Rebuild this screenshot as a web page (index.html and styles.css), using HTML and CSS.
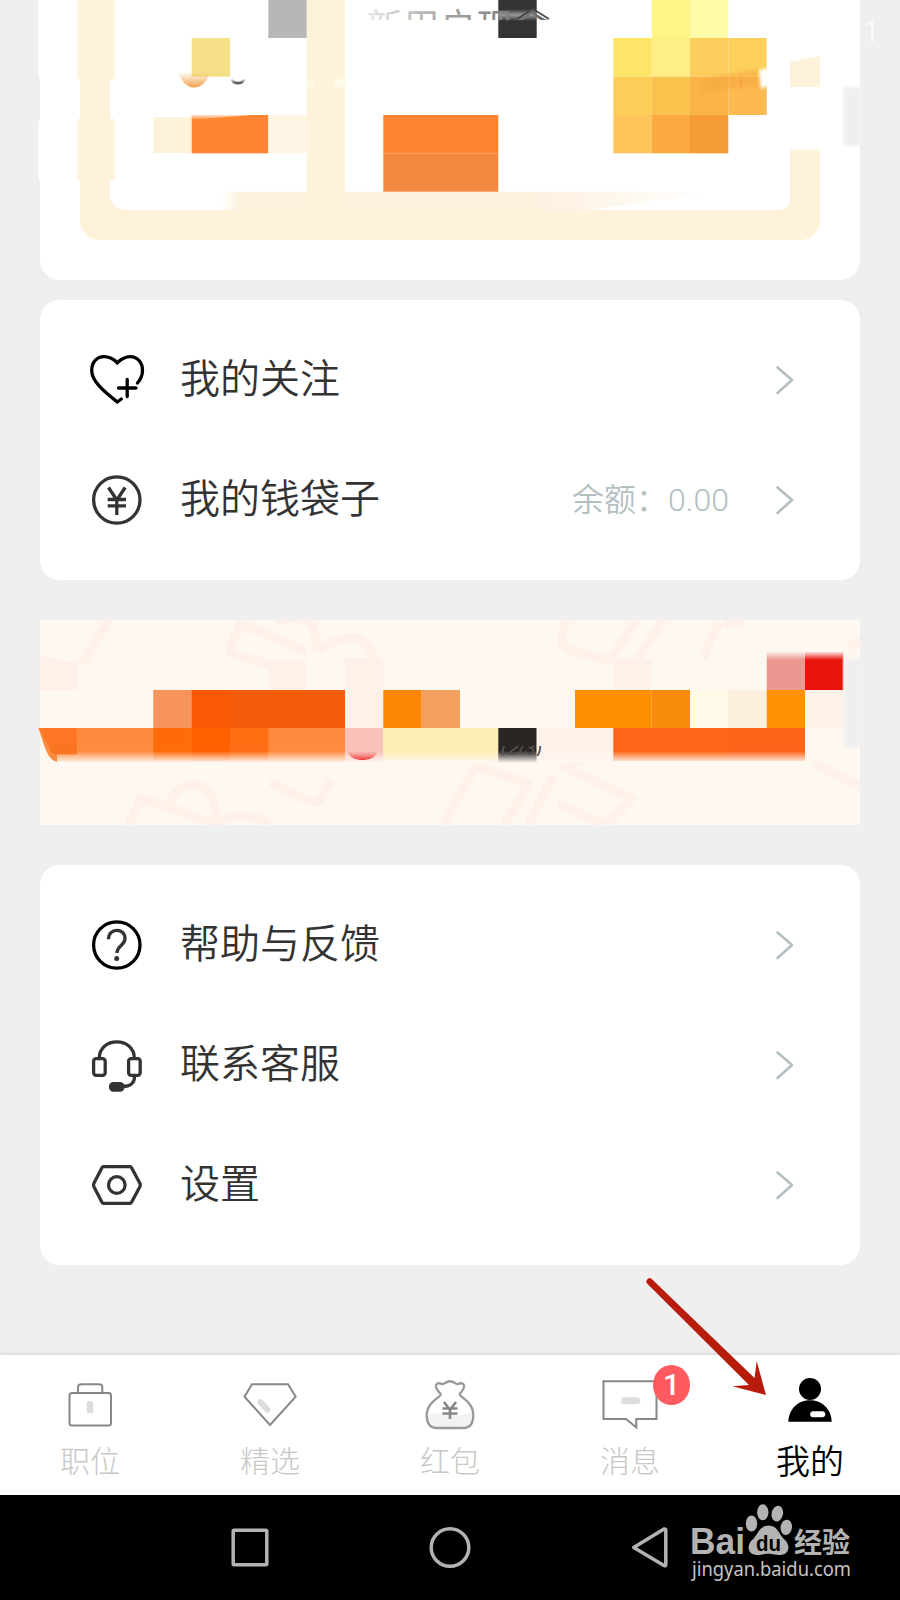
FILE: index.html
```html
<!DOCTYPE html>
<html lang="zh-CN">
<head>
<meta charset="utf-8">
<title>我的</title>
<link rel="stylesheet" href="styles.css">
</head>
<body>
<div class="screen">
  <main class="content">
    <svg class="promo" width="900" height="280" viewBox="0 0 900 280">
      <defs>
        <linearGradient id="stripFade" x1="0" x2="1" y1="0" y2="0"><stop offset="0" stop-color="#fdf0dd" stop-opacity="0"/><stop offset=".04" stop-color="#fdf0dd"/><stop offset=".6" stop-color="#fdf0dd"/><stop offset="1" stop-color="#fdf0dd" stop-opacity="0"/></linearGradient>
        <linearGradient id="coin" x1="0" x2="0" y1="0" y2="1"><stop offset=".2" stop-color="#f3a14a" stop-opacity="0"/><stop offset="1" stop-color="#f0a04c"/></linearGradient>
        <linearGradient id="dot" x1="0" x2="0" y1="0" y2="1"><stop offset=".3" stop-color="#555" stop-opacity="0"/><stop offset="1" stop-color="#555"/></linearGradient>
        <linearGradient id="titleFade" gradientUnits="userSpaceOnUse" x1="366" x2="550" y1="0" y2="0"><stop offset="0" stop-color="#e8e8e8"/><stop offset=".4" stop-color="#aaa"/><stop offset="1" stop-color="#666"/></linearGradient>
        <linearGradient id="orangeTop" x1="0" x2="0" y1="0" y2="1"><stop offset="0" stop-color="#fff" stop-opacity=".75"/><stop offset="1" stop-color="#fff" stop-opacity="0"/></linearGradient>
        <linearGradient id="shine" x1="0" x2="0" y1="0" y2="1"><stop offset="0" stop-color="#999" stop-opacity="0"/><stop offset=".5" stop-color="#999"/><stop offset="1" stop-color="#999" stop-opacity="0"/></linearGradient>
        <clipPath id="titleClip"><rect x="360" y="8" width="200" height="12"/></clipPath>
        <filter id="soft"><feGaussianBlur stdDeviation="1.5"/></filter>
      </defs>
      <path fill="#fff" d="M38.500 0H860V260a20 20 0 0 1-20 20H60a20 20 0 0 1-20-20V182l-1.500-5V123l1.500-5V80l-1.500-5z"/>
      <rect x="843.500" y="87" width="16.500" height="59" fill="#efefef" filter="url(#soft)"/>
      <path fill="#fff2da" d="M80 0h30v195a15 15 0 0 0 15 15H780a10 10 0 0 0 10-10V148h30v72a20 20 0 0 1-20 20H100a20 20 0 0 1-20-20z"/>
      <path fill="#fff2da" d="M77 0h38v79H77zM77 119h38v61H77z"/>
      <path fill="#fff" d="M110 180h5v16l-5 4z"/>
      <path fill="#fff2da" d="M790 62l30-6v31h-30z"/>
      <rect x="786" y="143" width="38" height="7" fill="#fff" filter="url(#soft)"/>
      <rect x="306.700" y="0" width="38.300" height="212" fill="#fff2da"/>
      <path d="M307 79h7v8h-7zM334 79h11v8h-11z" fill="#fffae7"/>
      <path d="M222 191.700H718L590 210H222z" fill="url(#stripFade)"/>
      <rect x="306.700" y="188" width="38.300" height="24" fill="#fff2da"/>
      <rect x="268.300" y="0" width="38.400" height="38" fill="#b7b7b7"/>
      <rect x="191.700" y="38" width="38.300" height="38.700" fill="#f6df89"/>
      <path d="M177 68h34c-3 13-9 19.500-17 19.500S181 81 177 68z" fill="url(#coin)"/>
      <path d="M231 77c2 8 12 8 14 0" fill="none" stroke="url(#dot)" stroke-width="3"/>
      <rect x="153.300" y="117" width="38.400" height="36" fill="#fff2da"/>
      <rect x="191.700" y="115" width="76.600" height="38.300" fill="#ff8532"/>
      <path d="M191.700 115h60l-60 5z" fill="url(#orangeTop)"/>
      <rect x="268.300" y="115" width="38.400" height="38.300" fill="#fff6e6"/>
      <rect x="383.300" y="115" width="115" height="38.300" fill="#ff8532"/>
      <rect x="383.300" y="153.300" width="115" height="38.400" fill="#f3893f"/>
      <rect x="498.300" y="0" width="38.400" height="38" fill="#333"/>
      <rect x="498.300" y="9" width="38.400" height="12" fill="url(#shine)"/>
      <g clip-path="url(#titleClip)"><text x="366" y="40" font-size="36.800" fill="url(#titleFade)">新用户现金</text></g>
      <path d="M517 19l16-10 16 10" fill="none" stroke="#444" stroke-width="1.500"/>
      <g>
        <rect x="651.700" y="0" width="38.300" height="38" fill="#fff587"/>
        <rect x="690" y="0" width="38.300" height="38" fill="#fffaa7"/>
        <rect x="613.300" y="38" width="38.400" height="38.700" fill="#fee567"/>
        <rect x="651.700" y="38" width="38.300" height="38.700" fill="#ffed87"/>
        <rect x="690" y="38" width="38.300" height="38.700" fill="#fccd5a"/>
        <rect x="728.300" y="38" width="38.400" height="38.700" fill="#fdd05c"/>
        <rect x="613.300" y="76.700" width="38.400" height="38.300" fill="#fdcd58"/>
        <rect x="651.700" y="76.700" width="38.300" height="38.300" fill="#f9c34e"/>
        <rect x="690" y="76.700" width="38.300" height="38.300" fill="#fbb546"/>
        <rect x="728.300" y="76.700" width="38.400" height="38.300" fill="#fdba50"/>
        <rect x="613.300" y="115" width="38.400" height="38.300" fill="#fec55a"/>
        <rect x="651.700" y="115" width="38.300" height="38.300" fill="#fca940"/>
        <rect x="690" y="115" width="38.300" height="38.300" fill="#f59c34"/>
        <path d="M700 79l58-10v18h-18l-40 8z" fill="#f7a63e" opacity=".5" filter="url(#soft)"/>
        <path d="M741 77v12" stroke="#f29c38" stroke-width="2" opacity=".6"/>
        <path d="M759 70l9-2v18l-7 3z" fill="#fff" filter="url(#soft)"/>
      </g>
      <text class="ghost" x="863" y="42" font-size="30">1</text>
    </svg>

    <section class="card">
      <div class="row">
        <svg class="row-icon" viewBox="0 0 60 60" stroke="#000"><path d="M34.300 49L30.300 52C19 43 4.700 32 4.700 20.500C4.700 12 10 6.700 17 6.700C23 6.700 27 9.300 30.300 12.800C34 9.300 38 6.700 43 6.700C51 6.700 55.500 13 55.500 20.500C55.500 25.500 54 29 50.500 33"/><path d="M31.500 38H49M40.200 29.500V46.500"/></svg>
        <span class="row-label">我的关注</span>
        <svg class="chevron" viewBox="0 0 39 60"><path d="M11.500 17.500L26 30L11.500 43"/></svg>
      </div>
      <div class="row">
        <svg class="row-icon" viewBox="0 0 60 60"><circle cx="29.800" cy="30" r="23.200"/><path stroke-linecap="butt" d="M21.500 17.500L29.800 30L38.200 17.500M29.800 29V45M20.700 29.500H39M20.700 35.800H39"/></svg>
        <span class="row-label">我的钱袋子</span>
        <span class="balance">余额：0.00</span>
        <svg class="chevron" viewBox="0 0 39 60"><path d="M11.500 17.500L26 30L11.500 43"/></svg>
      </div>
    </section>

    <svg class="banner" width="900" height="205" viewBox="0 0 900 205">
      <defs>
        <linearGradient id="fadeDown" x1="0" x2="0" y1="0" y2="1"><stop offset="0" stop-color="#fff8f1" stop-opacity="0"/><stop offset="1" stop-color="#fff8f1"/></linearGradient>
        <linearGradient id="fadeUp" x1="0" x2="0" y1="1" y2="0"><stop offset="0" stop-color="#fff8f1" stop-opacity="0"/><stop offset="1" stop-color="#fff8f1"/></linearGradient>
        <linearGradient id="redDot" x1="0" x2="0" y1="0" y2="1"><stop offset="0" stop-color="#f04040" stop-opacity="0"/><stop offset="1" stop-color="#f03c3c"/></linearGradient>
        <clipPath id="bannerClip"><rect x="38" y="0" width="822" height="205"/></clipPath>
        <clipPath id="countClip"><rect x="500" y="126" width="60" height="10"/></clipPath>
        <filter id="edge"><feGaussianBlur stdDeviation="2"/></filter>
      </defs>
      <rect x="40" y="0" width="820" height="205" fill="#fff8f1"/>
      <g clip-path="url(#bannerClip)">
        <g class="doodle">
          <path d="M109 0L82 44M40 40L64 45"/>
          <path d="M242 2L230 28Q230 34 237 35L304 54M242 4L306 31M276 3Q290 -6 304 0Q317 5 317 30M318 31Q335 17 355 18Q375 23 374 48M270 162L310 181Q318 184 322 176L332 160"/>
          <path d="M129 205L141 178L224 207M170 184Q176 165 193 164Q217 167 216 202M220 202Q242 188 270 204"/>
          <path d="M566 0L561 19Q563 29 576 32L612 41M637 0L611 38M663 0L638 38M720 2L710 20L703 38M724 5L744 0"/>
          <path d="M443 205L473 151L480 147L529 164L504 205M554 155L528 205M560 145L610 168L632 178L605 205M558 184L603 204M565 147L592 134"/>
          <path d="M813 143L870 171M848 27L862 20"/>
        </g>
        <path d="M268.300 40h38.400v32h-38.400zM345 38h38.300v72H345zM613 39h38.700v31H613zM40 42h37v28H40z" fill="#fff1e9"/>
      </g>
      <rect x="153.300" y="70" width="38.400" height="38" fill="#f6945b"/>
      <rect x="191.700" y="70" width="153.300" height="38" fill="#f65c0b"/>
      <rect x="191.700" y="70" width="38.300" height="38" fill="#fa5905"/>
      <rect x="383.300" y="70" width="38.400" height="38" fill="#fc8705"/>
      <rect x="421.700" y="70" width="38.300" height="38" fill="#f39f5e"/>
      <path fill="#ff8b3e" d="M38.500 108H345v34H60C49 142 46 132 38.500 108z"/>
      <path fill="#ff7624" d="M38.500 108H76.700v27H57C50 134 48 122 38.500 108z"/>
      <rect x="153.300" y="108" width="38.400" height="34" fill="#ff6b0a"/>
      <rect x="191.700" y="108" width="38.300" height="34" fill="#ff6000"/>
      <rect x="230" y="108" width="38.300" height="34" fill="#ff6e12"/>
      <rect x="345" y="108" width="38.300" height="34" fill="#f8c2b9"/>
      <rect x="383.300" y="108" width="115" height="33" fill="#feedb4"/>
      <rect x="498.300" y="108" width="38.400" height="35" fill="#292623"/>
      <rect x="536.700" y="108" width="76.600" height="33" fill="#fff2eb"/>
      <rect x="613.300" y="108" width="191.700" height="33" fill="#ff6618"/>
      <rect x="728.300" y="108" width="76.700" height="33" fill="#ff6319"/>
      <rect x="57" y="131" width="556" height="12" fill="url(#fadeDown)"/>
      <rect x="613" y="131" width="192" height="12" fill="url(#fadeDown)"/>
      <path fill="#f97420" d="M50 123V130Q51 134 57 134H77V123z"/>
      <path d="M347 131h31c-3 7-9 9-15.500 9S350 138 347 131z" fill="url(#redDot)"/>
      <g clip-path="url(#countClip)"><text class="count" x="501" y="135">(2/3)</text></g>
      <rect x="575" y="70" width="76.700" height="38" fill="#ff8f02"/>
      <rect x="651.700" y="70" width="38.300" height="38" fill="#f98b0b"/>
      <rect x="690" y="70" width="38.300" height="38" fill="#fffae7"/>
      <rect x="728.300" y="70" width="38.400" height="38" fill="#fdefdd"/>
      <rect x="766.700" y="70" width="38.300" height="38" fill="#ff9202"/>
      <rect x="805" y="70" width="38.300" height="38" fill="#fff2eb"/>
      <rect x="766.700" y="32" width="38.300" height="38" fill="#ec9792"/>
      <rect x="805" y="32" width="38.300" height="38" fill="#e9150d"/>
      <rect x="766" y="31" width="78" height="9" fill="url(#fadeUp)"/>
      <path d="M844 38h16v90h-16z" fill="#efefef" filter="url(#edge)"/>
    </svg>

    <section class="card">
      <div class="row">
        <svg class="row-icon" viewBox="0 0 60 60"><circle cx="29.800" cy="30" r="23.200" stroke="#000"/><path stroke-linecap="butt" d="M21.500 24.300C21.300 12.500 38 12.500 38 23.500C38 31 30 30 30 38"/><circle cx="29.700" cy="43.500" r="2.500" fill="#333" stroke="none"/></svg>
        <span class="row-label">帮助与反馈</span>
        <svg class="chevron" viewBox="0 0 39 60"><path d="M11.500 17.500L26 30L11.500 43"/></svg>
      </div>
      <div class="row">
        <svg class="row-icon" viewBox="0 0 60 60"><path d="M12.300 23C12.300 1.500 47.300 1.500 47.300 23M47.500 42C47.500 48 43 51.500 36 51.500"/><rect x="6.600" y="23.700" width="11.600" height="16.600" rx="2.500"/><rect x="41.600" y="23.700" width="11.600" height="16.600" rx="2.500"/><rect x="22" y="47" width="15.500" height="9.800" rx="4.500" fill="#333" stroke="none"/></svg>
        <span class="row-label">联系客服</span>
        <svg class="chevron" viewBox="0 0 39 60"><path d="M11.500 17.500L26 30L11.500 43"/></svg>
      </div>
      <div class="row">
        <svg class="row-icon" viewBox="0 0 60 60"><path stroke-linejoin="round" d="M16.500 11.700H43Q44 11.700 44.700 13L53 28.500Q53.600 30 53 31.500L44.700 47Q44 48.300 43 48.300H16.500Q15.500 48.300 14.800 47L6.800 31.500Q6.200 30 6.800 28.500L14.800 13Q15.500 11.700 16.500 11.700z"/><circle cx="29.800" cy="30" r="8.300"/></svg>
        <span class="row-label">设置</span>
        <svg class="chevron" viewBox="0 0 39 60"><path d="M11.500 17.500L26 30L11.500 43"/></svg>
      </div>
    </section>
  </main>

  <nav class="tabs">
    <div class="tab">
      <svg class="tab-icon" viewBox="0 0 60 60"><rect x="9.500" y="18" width="41.500" height="32.600" rx="2.500"/><path d="M18 17.500V12.500Q18 9.300 21.500 9.300H39Q42.300 9.300 42.300 12.500V17.500"/><rect class="mark" x="26.800" y="26" width="6.400" height="12.300" rx="2"/></svg>
      <span class="tab-label">职位</span>
    </div>
    <div class="tab">
      <svg class="tab-icon" viewBox="0 0 60 60"><path d="M12 9.300H48L55.700 21.700L30 50L4.500 21.700z"/><path class="dash" d="M20.500 27.300L27.500 34.700"/></svg>
      <span class="tab-label">精选</span>
    </div>
    <div class="tab">
      <svg class="tab-icon" viewBox="0 0 60 60"><path fill="#f3f3f3" stroke="none" d="M7 41Q17 35 28 39Q41 43 52 36Q56 53 43 53H17Q7 52 7 41z"/><path stroke="#999" stroke-width="2.300" d="M20.700 19C15 13 14 8 20 8.200Q23 10 25 8Q30 4.500 35 8Q37 10 40 8.200C46 8 45 13 39.700 19C39 22 53 26 53.300 40Q53.300 53 43 53H17Q6.700 53 6.700 40C7 26 22 22 20.700 19z"/><path stroke="#888" stroke-width="2.600" d="M24 27L30 35L36 27M30 34V44M22.500 33.500H37.500M22.500 38.500H37.500"/></svg>
      <span class="tab-label">红包</span>
    </div>
    <div class="tab">
      <svg class="tab-icon" viewBox="0 0 60 60"><path d="M3.500 6.300H56.500V44H36.300V52.500L26 44H3.500z"/><rect class="mark" x="21" y="22.300" width="19.400" height="7" rx="3.500"/></svg>
      <span class="badge">1</span>
      <span class="tab-label">消息</span>
    </div>
    <div class="tab active">
      <svg class="tab-icon" viewBox="0 0 60 60"><g fill="#000" stroke="none"><circle cx="30" cy="14" r="11"/><path d="M8.300 46.700C9.500 18 50.500 18 51.700 46.700z"/><rect x="30.200" y="36.300" width="15" height="6" rx="3" fill="#fff"/></g></svg>
      <span class="tab-label">我的</span>
    </div>
  </nav>

  <footer class="system">
    <svg width="900" height="105" viewBox="0 0 900 105">
      <g fill="none" stroke="#b3b3b3" stroke-width="3.500" stroke-linejoin="round"><rect x="233.200" y="35.200" width="33.600" height="34.600" rx="1"/><circle cx="450" cy="52.500" r="18.800"/><path d="M633.700 52.500L664 34Q665.800 33.500 665.800 35.500V69.500Q665.800 71.500 664 70.500z"/></g>
      <g fill="#b3b3b3">
        <text class="logo-latin" x="690" y="59" textLength="55" lengthAdjust="spacingAndGlyphs">Bai</text>
        <ellipse cx="751.500" cy="28.500" rx="5.700" ry="8"/><ellipse cx="762.800" cy="17.300" rx="5.700" ry="8"/><ellipse cx="777.300" cy="18.600" rx="5.700" ry="8" transform="rotate(12 777.300 18.600)"/><ellipse cx="786.300" cy="32.300" rx="5.700" ry="7.700" transform="rotate(8 786.300 32.300)"/>
        <path d="M768.500 30.500C778 30.500 779 40 785 45C791 51 789 60 780 60C775 60 773 58.700 768.500 58.700S762 60 757 60C748 60 746 51 752 45C758 40 759 30.500 768.500 30.500z"/>
        <text class="logo-cjk" x="794" y="57.500">经验</text>
        <text class="logo-url" x="692" y="80.500" textLength="159" lengthAdjust="spacingAndGlyphs">jingyan.baidu.com</text>
      </g>
      <text class="logo-du" x="756" y="55.500" textLength="25" lengthAdjust="spacingAndGlyphs">du</text>
    </svg>
  </footer>

  <svg class="arrow" width="160" height="160" viewBox="0 0 160 160"><path fill="#b81c0c" d="M27.300 33.700A3.200 3.200 0 0 1 32 29.300L134.500 128L136.700 111L146 145L112.300 136.300L129 135z"/></svg>
</div>
</body>
</html>
```

FILE: styles.css
```css
* { box-sizing: border-box; }
body { margin: 0; font-family: Roboto, "Noto Sans CJK SC", sans-serif; }
.screen { position: relative; display: flex; flex-direction: column; width: 900px; height: 1600px; overflow: hidden; background: #efefef; }
.content { flex: 1; display: flex; flex-direction: column; }
svg { display: block; flex: none; }
.promo { font-family: "Noto Sans CJK SC", sans-serif; margin-bottom: 20px; }
.ghost { fill: #f9f9f9; font-family: Roboto, sans-serif; }
.card { margin: 0 40px; padding: 20px 55px 20px 47px; border-radius: 20px; background: #fff; }
.banner { margin: 40px 0; }
.doodle { fill: none; stroke: #fff1e9; stroke-width: 9; stroke-linejoin: round; }
.count { font: italic 20px "Liberation Sans", sans-serif; fill: #555; }
.row { display: flex; align-items: center; height: 120px; }
.row-icon { width: 60px; height: 60px; margin-right: 33px; fill: none; stroke: #333; stroke-width: 3.3; stroke-linecap: round; }
.row-icon[stroke] { stroke: #000; }
.row-label { flex: 1; font-size: 40px; line-height: 60px; font-weight: 350; color: #333; }
.balance { margin-right: 37px; font-size: 32px; line-height: 48px; font-weight: 350; color: #b4bfc2; }
.chevron { width: 39px; height: 60px; fill: none; stroke: #b4bfc2; stroke-width: 2.6; stroke-linecap: round; stroke-linejoin: round; }
.tabs { display: flex; height: 140px; background: #fff; box-shadow: 0 0 5px rgba(0, 0, 0, .16); }
.tab { position: relative; display: flex; flex: 1; flex-direction: column; align-items: center; padding-top: 20px; }
.tab-icon { width: 60px; height: 60px; fill: none; stroke: #888; stroke-width: 2; }
.mark { fill: #ddd; stroke: none; }
.dash { stroke: #ddd; stroke-width: 6; stroke-linecap: round; }
.tab-label { margin-top: 2px; font-size: 30px; line-height: 50px; font-weight: 300; color: #c8c8c8; white-space: nowrap; }
.active .tab-label { font-size: 34px; font-weight: 350; color: #000; }
.badge { position: absolute; left: 113px; top: 10px; width: 37px; height: 40px; border-radius: 50%; background: #ff5a60; color: #fff; font-size: 30px; line-height: 40px; font-weight: 500; text-align: center; }
.system { height: 105px; background: #000; }
.logo-latin { font: bold 36px "Liberation Sans", sans-serif; }
.logo-du { font: bold 22px "Liberation Sans", sans-serif; fill: #000; }
.logo-cjk { font: bold 28px "Noto Sans CJK SC", sans-serif; }
.logo-url { font: 20px "Noto Sans", sans-serif; fill: #c4c4c4; }
.arrow { position: absolute; left: 620px; top: 1250px; }
```
